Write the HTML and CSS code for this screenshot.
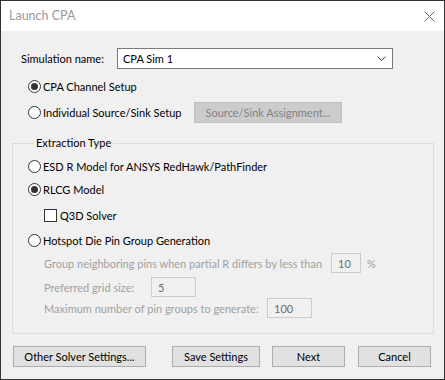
FILE: index.html
```html
<!DOCTYPE html>
<html>
<head>
<meta charset="utf-8">
<link rel="stylesheet" href="styles.css">
</head>
<body>
<div class="window">
  <div class="titlebar">
    <span class="title">Launch CPA</span>
    <svg class="close" width="11" height="11" viewBox="0 0 11 11"><path d="M0.5 0.5 L10.5 10.5 M10.5 0.5 L0.5 10.5" stroke="#666" stroke-width="1" fill="none"/></svg>
  </div>
  <div class="content">
    <div class="name-row">
      <span class="name-label">Simulation name:</span>
      <div class="combo">
        <span>CPA Sim 1</span>
        <svg class="chev" width="9" height="5" viewBox="0 0 9 5"><path d="M0.5 0.5 L4.5 4.5 L8.5 0.5" stroke="#444" fill="none"/></svg>
      </div>
    </div>
    <div class="opt-row first">
      <span class="radio checked"></span><span class="opt-text">CPA Channel Setup</span>
    </div>
    <div class="opt-row second">
      <span class="radio"></span><span class="opt-text w-indiv">Individual Source/Sink Setup</span>
      <span class="btn disabled">Source/Sink Assignment...</span>
    </div>
    <fieldset class="group">
      <legend>Extraction Type</legend>
      <div class="g-row esd"><span class="radio"></span><span class="opt-text">ESD R Model for ANSYS RedHawk/PathFinder</span></div>
      <div class="g-row rlcg"><span class="radio checked"></span><span class="opt-text">RLCG Model</span></div>
      <div class="g-row q3d sub"><span class="check"></span><span class="check-text">Q3D Solver</span></div>
      <div class="g-row hot"><span class="radio"></span><span class="opt-text">Hotspot Die Pin Group Generation</span></div>
      <div class="g-row field f1 sub"><span class="dis-label w1">Group neighboring pins when partial R differs by less than</span><span class="tbox w30">10</span><span class="dis-label pct">%</span></div>
      <div class="g-row field f2 sub"><span class="dis-label w2">Preferred grid size:</span><span class="tbox w45">5</span></div>
      <div class="g-row field f3 sub"><span class="dis-label w3">Maximum number of pin groups to generate:</span><span class="tbox w45">100</span></div>
    </fieldset>
    <div class="buttons">
      <span class="btn b-other">Other Solver Settings...</span>
      <span class="btn b-save">Save Settings</span>
      <span class="btn b-next">Next</span>
      <span class="btn b-cancel">Cancel</span>
    </div>
  </div>
</div>
</body>
</html>
```

FILE: styles.css
```css
* { box-sizing: border-box; }
html, body { margin: 0; padding: 0; background: #f0f0f0; }
body {
  font-family: "Lato", "Liberation Sans", sans-serif;
  font-size: 11px;
  color: #000;
}
.window {
  width: 445px;
  height: 380px;
  border: 1px solid #333;
  background: #f0f0f0;
  display: flex;
  flex-direction: column;
}
.titlebar {
  height: 30px;
  background: #fff;
  display: flex;
  align-items: center;
  padding-left: 8px;
  padding-right: 9px;
}
.title {
  color: #999;
  font-size: 12.5px;
  flex: 1;
  padding-bottom: 1px;
}
.close { display: block; margin-top: 0; }
.content {
  flex: 1;
  display: flex;
  flex-direction: column;
}
.name-row {
  display: flex;
  align-items: center;
  margin-top: 17px;
  height: 21px;
  padding-left: 20px;
}
.name-label { width: 96px; flex: none; white-space: nowrap; }
.combo {
  width: 276px;
  height: 21px;
  border: 1px solid #7a7a7a;
  background: #fff;
  display: flex;
  align-items: center;
  padding-left: 5px;
  padding-right: 6px;
}
.combo span { flex: 1; }
.chev { display: block; }
.opt-row, .g-row {
  display: flex;
  align-items: center;
  height: 20px;
  white-space: nowrap;
}
.opt-row { padding-left: 27px; }
.opt-row.first { margin-top: 7px; }
.opt-row.second { margin-top: 6px; }
.radio {
  width: 13px;
  height: 13px;
  border: 1px solid #333;
  border-radius: 50%;
  background: #fff;
  display: flex;
  align-items: center;
  justify-content: center;
  flex: none;
}
.radio.checked::after {
  content: "";
  width: 7px;
  height: 7px;
  border-radius: 50%;
  background: #333;
}
.opt-text { margin-left: 2px; }
.w-indiv { width: 151px; flex: none; }
.btn {
  display: flex;
  align-items: center;
  justify-content: center;
  height: 21px;
  border: 1px solid #adadad;
  background: #e1e1e1;
  color: #000;
  white-space: nowrap;
  flex: none;
}
.btn.disabled {
  width: 148px;
  background: #cccccc;
  border-color: #bfbfbf;
  color: #838383;
}
.group {
  margin: 13px 0 0 11px;
  width: 422px;
  height: 199px;
  border: 1px solid #dcdcdc;
  padding: 5px 0 0 15px;
}
.group legend {
  margin-left: 6px;
  padding: 0 2px;
  line-height: 16px;
}
.g-row.rlcg { margin-top: 3px; }
.g-row.q3d { margin-top: 6px; }
.g-row.hot { margin-top: 5px; }
.g-row.f1 { margin-top: 3px; }
.g-row.f2 { margin-top: 4px; }
.g-row.f3 { margin-top: 1px; }
.g-row.sub { padding-left: 16px; }
.check {
  width: 13px;
  height: 13px;
  border: 1px solid #333;
  background: #fff;
  flex: none;
}
.check-text { margin-left: 3px; }
.dis-label { color: #a0a0a0; flex: none; }
.w1 { width: 287px; }
.w2 { width: 107px; }
.w3 { width: 223px; }
.pct { margin-left: 6px; }
.tbox {
  height: 20px;
  border: 1px solid #cccccc;
  background: #f0f0f0;
  color: #6d6d6d;
  display: flex;
  align-items: center;
  padding-left: 6px;
  flex: none;
}
.w30 { width: 30px; }
.w45 { width: 45px; }
.buttons {
  display: flex;
  margin-top: 12px;
  padding-left: 12px;
}
.b-other { width: 133px; }
.b-save { width: 88px; margin-left: 26px; }
.b-next { width: 73px; margin-left: 12px; }
.b-cancel { width: 73px; margin-left: 13px; }
```
